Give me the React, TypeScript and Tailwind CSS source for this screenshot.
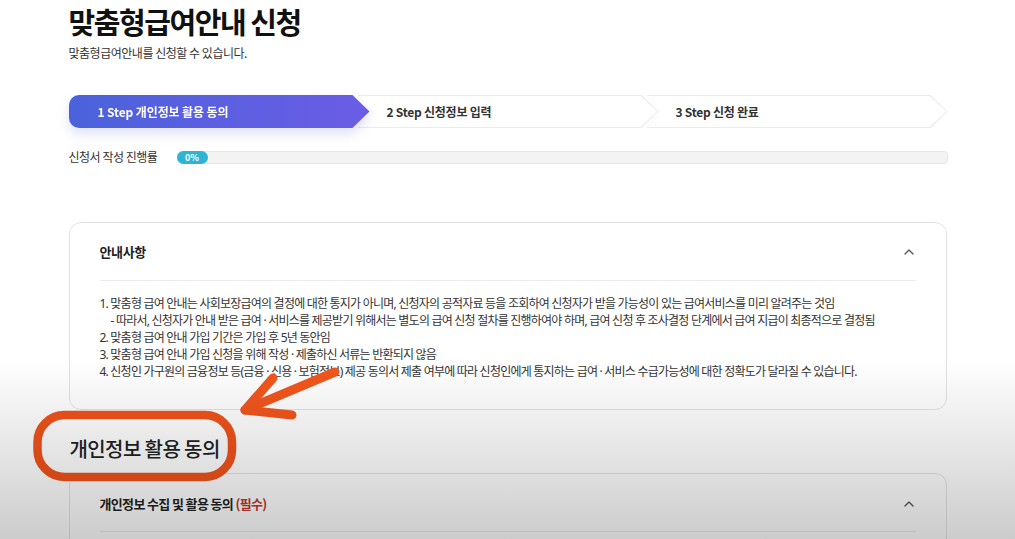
import { ChevronUp } from 'lucide-react';

const font = { fontFamily: '"Noto Sans CJK KR", "Noto Sans", sans-serif' };
const listFont = { fontFamily: '"Noto Sans", "Noto Sans CJK KR", sans-serif' };

const steps = ['1 Step 개인정보 활용 동의', '2 Step 신청정보 입력', '3 Step 신청 완료'];

const notices = [
    '1. 맞춤형 급여 안내는 사회보장급여의 결정에 대한 통지가 아니며, 신청자의 공적자료 등을 조회하여 신청자가 받을 가능성이 있는 급여서비스를 미리 알려주는 것임',
    '- 따라서, 신청자가 안내 받은 급여 · 서비스를 제공받기 위해서는 별도의 급여 신청 절차를 진행하여야 하며, 급여 신청 후 조사결정 단계에서 급여 지급이 최종적으로 결정됨',
    '2. 맞춤형 급여 안내 가입 기간은 가입 후 5년 동안임',
    '3. 맞춤형 급여 안내 가입 신청을 위해 작성 · 제출하신 서류는 반환되지 않음',
    '4. 신청인 가구원의 금융정보 등(금융 · 신용 · 보험정보) 제공 동의서 제출 여부에 따라 신청인에게 통지하는 급여 · 서비스 수급가능성에 대한 정확도가 달라질 수 있습니다.',
];

function StepBar() {
    return (
        <div className="flex h-[33px] mt-[34px]">
            {/* Step 1 - active */}
            <div className="relative w-[301px] h-full shrink-0 z-30 drop-shadow-[0_6px_6px_rgba(80,90,200,0.18)]">
                <div className="h-full rounded-l-[10px] bg-gradient-to-r from-[#4a62dc] to-[#6b5ce6] [clip-path:polygon(0_0,calc(100%-17px)_0,100%_50%,calc(100%-17px)_100%,0_100%)] flex items-center pl-[29px]">
                    <span className="text-[12px] font-bold text-white tracking-[-0.01em]">{steps[0]}</span>
                </div>
            </div>
            {/* Step 2 */}
            <div className="relative w-[301px] h-full shrink-0 -ml-[12px] z-20 bg-[#ebebeb] [clip-path:polygon(0_0,calc(100%-17px)_0,100%_50%,calc(100%-17px)_100%,0_100%,14px_50%)]">
                <div className="absolute inset-[1px] bg-white [clip-path:polygon(0_0,calc(100%-17px)_0,100%_50%,calc(100%-17px)_100%,0_100%,13px_50%)]" />
                <div className="relative h-full flex items-center pl-[29px]">
                    <span className="text-[12px] font-bold text-[#333] tracking-[-0.02em]">{steps[1]}</span>
                </div>
            </div>
            {/* Step 3 */}
            <div className="relative w-[301px] h-full shrink-0 -ml-[12px] z-10 bg-[#ebebeb] [clip-path:polygon(0_0,calc(100%-17px)_0,100%_50%,calc(100%-17px)_100%,0_100%,14px_50%)]">
                <div className="absolute inset-[1px] bg-white [clip-path:polygon(0_0,calc(100%-17px)_0,100%_50%,calc(100%-17px)_100%,0_100%,13px_50%)]" />
                <div className="relative h-full flex items-center pl-[29px]">
                    <span className="text-[12px] font-bold text-[#333] tracking-[-0.02em]">{steps[2]}</span>
                </div>
            </div>
        </div>
    );
}

export default function App() {
    return (
        <div className="relative w-[1015px] h-[539px] overflow-hidden bg-white text-[#222]" style={font}>
            <div className="w-[878px] mx-auto">
                {/* Title */}
                <h1 className="mt-[3px] text-[29px] leading-[36px] font-bold text-[#111] tracking-[-0.05em]">맞춤형급여안내 신청</h1>
                <p className="mt-[6px] text-[12px] leading-[16px] text-[#333] tracking-[-0.04em]">맞춤형급여안내를 신청할 수 있습니다.</p>

                <StepBar />

                {/* Progress */}
                <div className="flex items-center h-[14px] mt-[22px]">
                    <span className="w-[108px] text-[12px] text-[#333] tracking-[-0.04em]">신청서 작성 진행률</span>
                    <div className="flex-1 h-[13px] -mr-[1px] rounded-[4px] bg-[#f3f3f3] border border-[#e6e6e6] flex items-center">
                        <div className="h-[13px] w-[31px] -my-[1px] -ml-[1px] rounded-full bg-[#2eb4d4] flex items-center justify-center">
                            <span className="text-[9px] font-bold text-white leading-none">0%</span>
                        </div>
                    </div>
                </div>

                {/* Notice card */}
                <div className="mt-[58px] rounded-[12px] border border-[#e3e3e3] px-[30px] pb-[29px]">
                    <div className="h-[58px] flex items-center justify-between border-b border-[#ebebeb]">
                        <span className="text-[13px] font-bold text-[#222] tracking-[-0.03em]">안내사항</span>
                        <ChevronUp className="w-[16px] h-[16px] text-[#555] -mr-[1px]" strokeWidth={2} />
                    </div>
                    <ul className="pt-[14px] text-[12px] leading-[17px] text-[#333] tracking-[-0.065em]" style={listFont}>
                        {notices.map((n, i) => (
                            <li key={i} className={i === 1 ? 'pl-[11px]' : ''}>{n}</li>
                        ))}
                    </ul>
                </div>

                {/* Section */}
                <h2 className="mt-[26px] text-[20px] leading-[26px] font-medium text-[#222] tracking-[-0.03em] pl-[1px]">개인정보 활용 동의</h2>

                <div className="mt-[11px] rounded-[12px] border border-[#e3e3e3] px-[30px] h-[100px]">
                    <div className="h-[58px] pt-[3px] flex items-center justify-between border-b border-[#ebebeb]">
                        <span className="text-[13px] font-bold text-[#222] tracking-[-0.05em]">
                            개인정보 수집 및 활용 동의 <span className="text-[#c0392b]">(필수)</span>
                        </span>
                        <ChevronUp className="w-[16px] h-[16px] text-[#555] -mr-[1px]" strokeWidth={2} />
                    </div>
                </div>
            </div>

            {/* Annotation */}
            <svg className="absolute inset-0 pointer-events-none" width="1015" height="539" viewBox="0 0 1015 539">
                <rect x="37.5" y="415" width="194.5" height="62" rx="27" fill="none" stroke="#f0531b" strokeWidth="8.5" />
                <g stroke="#f2561c" strokeWidth="9" strokeLinecap="round" strokeLinejoin="round" fill="none">
                    <path d="M335 372 L245 410" />
                    <path d="M273 378 L245 410 L292 415" />
                </g>
            </svg>

            {/* Video vignette */}
            <div className="absolute inset-x-0 bottom-0 h-[180px] pointer-events-none bg-gradient-to-b from-transparent to-[rgba(0,0,0,0.2)]" />
        </div>
    );
}
